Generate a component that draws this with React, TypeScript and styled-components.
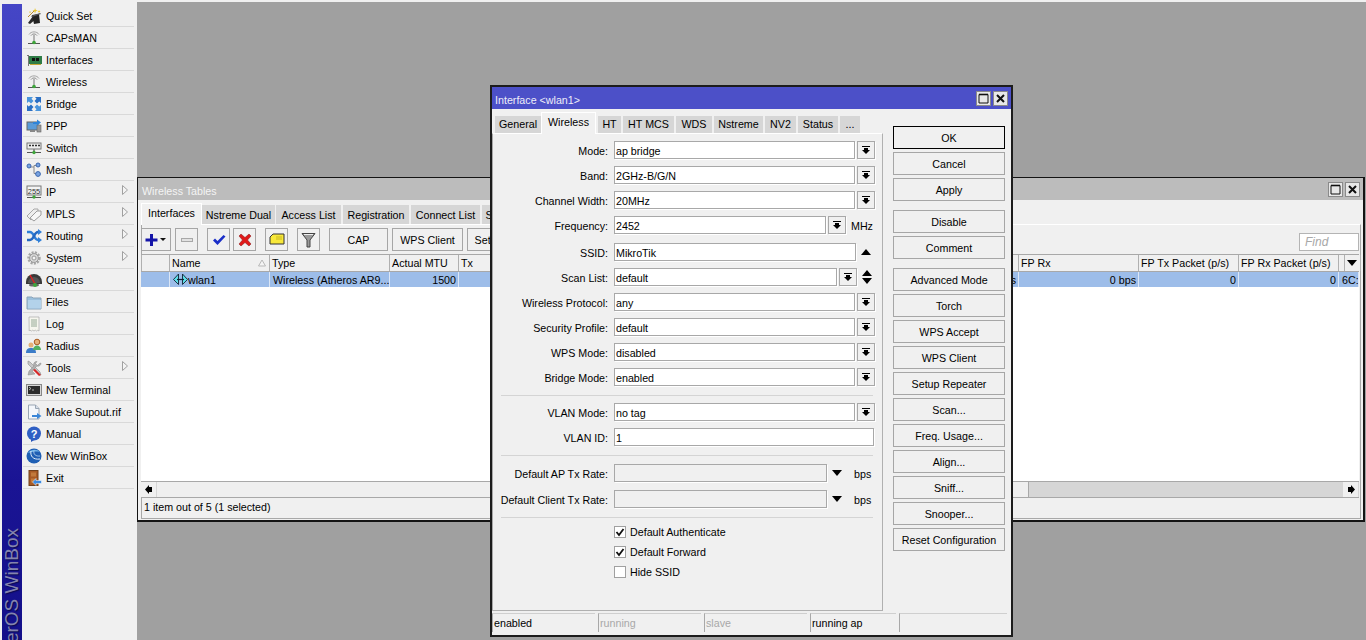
import React from "react";
import styled, { createGlobalStyle } from "styled-components";

const Global = createGlobalStyle`
  html, body { margin: 0; padding: 0; background: #f0f0f0; overflow: hidden; }
  * { box-sizing: border-box; }
  body { font: 10.7px "Liberation Sans", Arial, sans-serif; color: #000; }
`;

const Page = styled.div`
  display: flex;
  width: 1366px;
  height: 640px;
  overflow: hidden;
  background: #f0f0f0;
`;
const Sidebar = styled.aside`
  width: 137px;
  height: 640px;
  padding-left: 2px;
  display: flex;
  background: #f0f0f0;
  flex: none;
`;
const BrandStrip = styled.div`
  width: 20px;
  height: 636px;
  margin-top: 4px;
  background: linear-gradient(180deg, #4546c6 0%, #3232b0 40%, #1a1494 75%, #14108a 100%);
  display: flex;
  flex-direction: column;
  justify-content: flex-end;
  align-items: center;
  overflow: hidden;
`;
const BrandText = styled.div`
  writing-mode: vertical-rl;
  transform: rotate(180deg);
  white-space: nowrap;
  font-size: 19px;
  line-height: 20px;
  color: #8484ae;
  text-shadow: -1px 1px 1px #0b0b50;
  margin-bottom: -43px;
  flex: none;
`;
const Menu = styled.nav`
  width: 113px;
  padding: 5px 0 0 1px;
`;
const MenuRow = styled.div`
  height: 22px;
  display: flex;
  align-items: center;
  position: relative;
  border-bottom: 1px solid #d9d9d9;
  padding-left: 3px;
  gap: 4px;
  width: 111px;
`;
const MenuGlyph = styled.svg`
  width: 16px;
  height: 16px;
  flex: none;
`;
const MenuLabel = styled.span`
  white-space: nowrap;
  flex: 1;
`;
const SubArrow = styled.svg`
  width: 6px;
  height: 10px;
  margin: 0 6px 3px 0;
  flex: none;
`;
const Desktop = styled.main`
  flex: 1;
  position: relative;
  margin-top: 2px;
  background: #a0a0a0;
  overflow: hidden;
`;
const TablesWindow = styled.section`
  position: absolute;
  left: 0;
  top: 175px;
  width: 1228px;
  height: 345px;
  background: #f0f0f0;
  border: 1px solid #141414;
  border-width: 1px 2px 2px 1px;
  display: flex;
  flex-direction: column;
`;
const DialogWindow = styled.section`
  position: absolute;
  left: 353px;
  top: 83px;
  width: 523px;
  height: 552px;
  background: #f0f0f0;
  border: 2px solid #1c1c1c;
  display: flex;
  flex-direction: column;
`;
const TitleBar = styled.header<{ $active?: boolean }>`
  height: 22px;
  flex: none;
  display: flex;
  align-items: center;
  padding: 0 3px 0 ${(p) => (p.$active ? 3 : 4)}px;
  background: ${(p) => (p.$active ? "#4c50c8" : "#bcbcbc")};
  color: ${(p) => (p.$active ? "#ececf8" : "#f4f4f4")};
`;
const TitleText = styled.span`
  flex: 1;
  white-space: nowrap;
  padding-top: 4px;
`;
const WinButton = styled.button`
  width: 15px;
  height: 15px;
  margin-left: 2px;
  padding: 0;
  display: flex;
  align-items: center;
  justify-content: center;
  background: #e8e8e8;
  border: 1px solid #8a8a8a;
`;
const TabStrip = styled.div<{ $pad: number; $h: number }>`
  display: flex;
  align-items: flex-end;
  height: ${(p) => p.$h}px;
  padding-left: ${(p) => p.$pad}px;
  flex: none;
  position: relative;
`;
const Tab = styled.div<{ $w: number; $active?: boolean; $gap?: number; $tall?: boolean }>`
  width: ${(p) => p.$w}px;
  height: ${(p) => (p.$active ? 22 : p.$tall ? 19 : 17)}px;
  margin-right: ${(p) => p.$gap ?? 2}px;
  flex: none;
  display: flex;
  align-items: center;
  justify-content: center;
  white-space: nowrap;
  overflow: hidden;
  padding-bottom: ${(p) => (p.$tall ? 0 : 2)}px;
  background: ${(p) => (p.$active ? "#f0f0f0" : "#d6d6d6")};
  ${(p) => (p.$active ? "border: 1px solid #ffffff; border-bottom: 0; padding-bottom: 3px; margin-bottom: -1px; z-index: 1;" : "")}
`;
const TablesPanel = styled.div`
  height: 295px;
  margin: 0 2px 0 3px;
  border: 1px solid #a8a8a8;
  border-top-color: #ffffff;
  border-left-color: #a8a8a8;
  display: flex;
  flex-direction: column;
`;
const Toolbar = styled.div`
  display: flex;
  align-items: flex-start;
  height: 26px;
  padding-top: 3px;
  margin-left: -1px;
  flex: none;
`;
const ToolButton = styled.button<{ $w: number; $gap?: number }>`
  width: ${(p) => p.$w}px;
  height: 23px;
  margin-right: ${(p) => p.$gap ?? 4}px;
  flex: none;
  padding: 0;
  display: flex;
  align-items: center;
  justify-content: center;
  font: inherit;
  color: #000;
  white-space: nowrap;
  overflow: hidden;
  background: #f0f0f0;
  border: 1px solid #a6a6a6;
`;
const FindBox = styled.div`
  position: absolute;
  right: 1px;
  top: 8px;
  width: 60px;
  height: 18px;
  background: #fff;
  border: 1px solid #b4b4b4;
  padding: 2px 5px;
  color: #a8a8a8;
  font-style: italic;
  font-size: 12px;
  line-height: 13px;
`;
const ToolbarWrap = styled.div`
  position: relative;
  flex: none;
`;
const Table = styled.div`
  width: 1218px;
  height: 228px;
  margin-top: 3px;
  margin-left: -1px;
  background: #fff;
  display: flex;
  flex-direction: column;
  border-bottom: 1px solid #a8a8a8;
  flex: none;
`;
const HeadRow = styled.div`
  display: flex;
  height: 18px;
  flex: none;
  background: #f0f0f0;
  border-top: 1px solid #a8a8a8;
  border-bottom: 1px solid #a8a8a8;
`;
const HeadCell = styled.div<{ $w: number }>`
  width: ${(p) => p.$w}px;
  flex: none;
  padding: 0 3px 0 2px;
  white-space: nowrap;
  overflow: hidden;
  border-right: 1px solid #b0b0b0;
  border-left: 0;
  display: flex;
  align-items: center;
  justify-content: space-between;
  &:first-child { border-left: 1px solid #b0b0b0; }
`;
const DataRow = styled.div`
  display: flex;
  height: 15px;
  flex: none;
  background: #9dbde9;
`;
const DataCell = styled.div<{ $w: number; $right?: boolean }>`
  width: ${(p) => p.$w}px;
  flex: none;
  padding: 0 2px 0 3px;
  white-space: nowrap;
  overflow: hidden;
  border-right: 1px solid #dbe6f5;
  display: flex;
  align-items: center;
  justify-content: ${(p) => (p.$right ? "flex-end" : "flex-start")};
`;
const TableFill = styled.div`
  flex: 1;
`;
const HScroll = styled.div`
  width: 1218px;
  height: 16px;
  margin-left: -1px;
  display: flex;
  flex: none;
  background: #d6d6d6;
  border-bottom: 1px solid #a8a8a8;
`;
const ScrollBtn = styled.div`
  width: 16px;
  flex: none;
  background: #f0f0f0;
  border-right: 1px solid #d6d6d6;
  display: flex;
  align-items: center;
  justify-content: center;
`;
const ScrollThumb = styled.div`
  width: 872px;
  flex: none;
  background: #efefef;
  border-right: 1px solid #a8a8a8;
`;
const ScrollTrack = styled.div`
  flex: 1;
`;
const CountBar = styled.div`
  padding: 3px 2px 0;
  white-space: nowrap;
`;
const DialogBody = styled.div`
  display: flex;
  height: 504px;
  padding-left: 0;
  flex: none;
`;
const TabColumn = styled.div`
  width: 391px;
  flex: none;
  display: flex;
  flex-direction: column;
`;
const FormPanel = styled.div`
  height: 478px;
  border: 1px solid #b0b0b0;
  border-top-color: #ffffff;
  border-left: 1px solid #a8a8a8;
  padding-top: 7px;
  display: flex;
  flex-direction: column;
`;
const FormRow = styled.div<{ $top?: number }>`
  display: flex;
  align-items: center;
  height: 18px;
  margin-bottom: ${(p) => p.$top ?? 7}px;
  flex: none;
`;
const FieldLabel = styled.label`
  width: 115px;
  margin-right: 6px;
  padding-top: 2px;
  text-align: right;
  white-space: nowrap;
  flex: none;
`;
const TextField = styled.div<{ $w: number; $off?: boolean }>`
  width: ${(p) => p.$w}px;
  height: 18px;
  flex: none;
  padding: 3px 0 0 1px;
  line-height: 13px;
  white-space: nowrap;
  background: ${(p) => (p.$off ? "#f0f0f0" : "#fff")};
  border: 1px solid #a8a8a8;
  box-shadow: 1px 1px 0 #ffffff;
`;
const DropBtn = styled.div`
  width: 18px;
  height: 18px;
  flex: none;
  margin-left: 2px;
  display: flex;
  align-items: center;
  justify-content: center;
  background: #f0f0f0;
  border: 1px solid #a8a8a8;
  box-shadow: 1px 1px 0 #ffffff;
`;
const SideGlyph = styled.svg<{ $ml: number }>`
  margin-left: ${(p) => p.$ml}px;
  flex: none;
`;
const Unit = styled.span<{ $ml: number }>`
  margin-left: ${(p) => p.$ml}px;
  padding-top: 2px;
  white-space: nowrap;
`;
const Divider = styled.hr<{ $after: number }>`
  height: 1px;
  width: 372px;
  margin: 0 0 ${(p) => p.$after}px 8px;
  border: 0;
  background: #d4d4d4;
  flex: none;
`;
const CheckRow = styled.div`
  display: flex;
  align-items: center;
  height: 13px;
  margin: 0 0 7px 121px;
  gap: 4px;
  white-space: nowrap;
  flex: none;
`;
const CheckBox = styled.span`
  width: 12px;
  height: 12px;
  flex: none;
  background: #fff;
  border: 1px solid #a0a0a0;
  display: flex;
  align-items: center;
  justify-content: center;
`;
const ActionColumn = styled.div`
  width: 112px;
  margin-left: 10px;
  padding-top: 17px;
  flex: none;
  display: flex;
  flex-direction: column;
`;
const ActionButton = styled.button<{ $primary?: boolean; $after?: number }>`
  height: 23px;
  width: 112px;
  flex: none;
  margin-bottom: ${(p) => p.$after ?? 3}px;
  padding: 0;
  font: inherit;
  color: #000;
  background: #f0f0f0;
  border: 1px solid ${(p) => (p.$primary ? "#000" : "#a6a6a6")};
`;
const StatusBar = styled.footer`
  display: flex;
  height: 19px;
  padding-left: 0;
  gap: 3px;
  flex: none;
`;
const StatusCell = styled.div<{ $w: number; $off?: boolean }>`
  width: ${(p) => p.$w}px;
  flex: none;
  border-left: 1px solid #a8a8a8;
  border-top: 1px solid #cfcfcf;
  padding: 3px 0 0 1px;
  line-height: 13px;
  white-space: nowrap;
  color: ${(p) => (p.$off ? "#a8a8a8" : "#000")};
`;

const Antenna = () => (
  <>
    <path d="M3 4.5C5 1 11 1 13 4.5" fill="none" stroke="#a4a4a4" strokeWidth="1" />
    <path d="M5 5.5C6.5 3.5 9.5 3.5 11 5.5" fill="none" stroke="#888" strokeWidth="1" />
    <rect x="7.5" y="5" width="1" height="7" fill="#777" />
    <rect x="2" y="13" width="12" height="1" fill="#555" />
    <circle cx="8" cy="12.5" r="1.8" fill="#3da63a" />
  </>
);
const icons: Record<string, React.ReactNode> = {
  quick: (
    <>
      <path d="M2 15L7 8l3 3-6 5z" fill="#2a2a2a" />
      <path d="M6 7l7-1 1 9-6 1z" fill="#222" />
      <path d="M5 8l9-3 1 1-9 3z" fill="#555" />
      <path d="M2 9L9 2" stroke="#b88a2c" strokeWidth="1" />
      <path d="M9 0l.8 2 2 .5-2 .8L9 5.5 8.3 3.3 6.5 2.5l2-.5zM13 2l.5 1 1 .5-1 .4-.5 1-.4-1-1-.4 1-.5zM4 3l.4.8.8.3-.8.3-.4.8-.3-.8-.8-.3.8-.3z" fill="#e8c52e" />
    </>
  ),
  ant: <Antenna />,
  nic: (
    <>
      <path d="M1 3h2v11H2V4H1z" fill="#777" />
      <rect x="3" y="4" width="13" height="8" fill="#2f7c46" />
      <rect x="6" y="6" width="3" height="3" fill="#111" />
      <rect x="10" y="6" width="3" height="3" fill="#111" />
      <rect x="4" y="12" width="11" height="1" fill="#c8a83a" />
    </>
  ),
  bridge: (
    <>
      <path d="M1 1h6L5.5 2.8 7.5 5 5 7.5 2.8 5.5 1 7z" fill="#4a95dc" />
      <path d="M15 1H9l1.5 1.8L8.5 5 11 7.5l2.2-2L15 7z" fill="#2a6fc4" />
      <path d="M1 15h6l-1.5-1.8L7.5 11 5 8.5l-2.2 2L1 9z" fill="#2a6fc4" />
      <path d="M15 15H9l1.5-1.8L8.5 11 11 8.5l2.2 2L15 9z" fill="#4a95dc" />
    </>
  ),
  ppp: (
    <>
      <rect x="1" y="4" width="11" height="8" fill="#5a9bd8" stroke="#666" />
      <rect x="4" y="12" width="5" height="2" fill="#888" />
      <rect x="11" y="7" width="4" height="7" fill="#999" stroke="#666" strokeWidth=".6" />
      <path d="M7 4h4V1.5L15 4.5 11 7.5V6H7z" fill="#2f84d8" />
    </>
  ),
  sw: (
    <>
      <rect x="1" y="3" width="14" height="6" fill="#efefef" stroke="#777" />
      <path d="M3 5.5h2M6 5.5h2M9 5.5h2M12 5.5h2" stroke="#333" strokeWidth="1.4" />
      <rect x="1" y="12" width="14" height="1" fill="#555" />
      <rect x="7" y="9" width="2" height="3" fill="#888" />
      <circle cx="8" cy="12.5" r="1.7" fill="#3da63a" />
    </>
  ),
  mesh: (
    <>
      <path d="M3.5 5H8V3.5h4M8 5v6.5h3" fill="none" stroke="#8a8a8a" />
      <circle cx="3" cy="4" r="2" fill="#7aa4e0" stroke="#3a66b0" />
      <circle cx="12" cy="3" r="2" fill="#7aa4e0" stroke="#3a66b0" />
      <circle cx="12" cy="12" r="2.4" fill="#7aa4e0" stroke="#3a66b0" />
    </>
  ),
  ip: (
    <>
      <rect x="1" y="2" width="14" height="9" fill="#f4f4f4" stroke="#777" />
      <text x="8" y="9.6" fontSize="7.5" textAnchor="middle" fill="#333" fontFamily="Liberation Sans">255</text>
      <rect x="1" y="13" width="14" height="1" fill="#555" />
      <circle cx="8" cy="13" r="1.7" fill="#3da63a" />
    </>
  ),
  tag: (
    <>
      <path d="M1 10l7-7h4v4l-7 7z" fill="#eee" stroke="#a8a8a8" />
      <path d="M4 12l7-7h4v4l-7 6z" fill="#f7f7f7" stroke="#9c9c9c" />
    </>
  ),
  routing: (
    <>
      <path d="M1 4h3c4 0 4 8 8 8h1" fill="none" stroke="#2f7fd8" strokeWidth="2.4" />
      <path d="M1 12h3c4 0 4-8 8-8h1" fill="none" stroke="#2468c0" strokeWidth="2.4" />
      <path d="M12 1l4 3-4 3zM12 9l4 3-4 3z" fill="#2f7fd8" />
    </>
  ),
  gear: (
    <>
      <circle cx="8" cy="8" r="5.4" fill="none" stroke="#a6a6a6" strokeWidth="2.6" strokeDasharray="2 1.2" />
      <circle cx="8" cy="8" r="4.4" fill="#d8d8d8" stroke="#999" />
      <circle cx="8" cy="8" r="2" fill="#f4f4f4" stroke="#999" />
    </>
  ),
  gauge: (
    <>
      <path d="M0 10a8 8 0 0 1 16 0v2H0z" fill="#3a3a3a" />
      <path d="M2 11a6 6 0 0 1 12 0z" fill="#555" />
      <path d="M4 3l5 9" stroke="#e02020" strokeWidth="1.4" />
      <ellipse cx="8" cy="13" rx="5" ry="1.5" fill="#666" />
      <circle cx="9" cy="13" r="2" fill="#3da63a" />
    </>
  ),
  folder: (
    <>
      <path d="M1 3h5l1 1h8v11H1z" fill="#9cc0dd" stroke="#8aa3b8" />
      <rect x="2" y="6" width="13" height="8.5" fill="#b3d2ea" />
    </>
  ),
  log: (
    <>
      <path d="M3 1h10v14l-1.2-.8-1.2.8-1.3-.8-1.3.8-1.3-.8-1.3.8-1.4-.8-.8.8z" fill="#f6f6ee" stroke="#aaa" strokeWidth=".7" />
      <path d="M5 4h6M5 6h6M5 8h6M5 10h6" stroke="#8aa08a" strokeWidth=".9" />
    </>
  ),
  radius: (
    <>
      <circle cx="5" cy="7" r="2.5" fill="#e4b078" />
      <path d="M0 15c0-4 2-5 5-5s5 1 5 5z" fill="#3c7cc8" />
      <circle cx="11" cy="4" r="2.8" fill="#e4b078" stroke="#a85a20" />
      <path d="M7 12c0-3 2-4.5 4-4.5s4 1.5 4 4.5z" fill="#52b060" />
    </>
  ),
  tools: (
    <>
      <path d="M2 1l2 1 10 10 1 3-3-1L2 4z" fill="#c8c8c8" stroke="#8a8a8a" strokeWidth=".6" />
      <path d="M15 3a3 3 0 0 1-4 3L6 11 9 14 2 15l1-4 5-5a3 3 0 0 1 3-4.5L9.5 3.5 11.5 5.5 13.5 3.5z" fill="#b0b0b0" stroke="#888" strokeWidth=".5" />
      <path d="M9 9l6 6-2 1-6-6z" fill="#d82828" />
    </>
  ),
  term: (
    <>
      <rect x="0.5" y="2.5" width="15" height="11" fill="#d8d8d8" stroke="#888" />
      <rect x="2" y="4" width="12" height="8" fill="#2c2c2c" />
      <path d="M3 5l2 1.5-2 1.5M6 8h2" stroke="#ccc" strokeWidth=".8" fill="none" />
    </>
  ),
  supout: (
    <>
      <path d="M2.5 1h7L13 4.5V15H2.500z" fill="#f4f7fb" stroke="#9aa6b4" />
      <path d="M9.5 1v3.500H13" fill="#d5dde8" stroke="#9aa6b4" />
      <path d="M6 11h5V9l4.500 3-4.500 3v-2H6z" fill="#3a86d8" />
    </>
  ),
  help: (
    <>
      <path d="M5 13v3l4-2.500z" fill="#2a56b8" />
      <circle cx="8" cy="7.5" r="7" fill="#2f5fc4" />
      <text x="8" y="11.5" fontSize="11" fontWeight="bold" textAnchor="middle" fill="#fff" fontFamily="Liberation Sans">?</text>
    </>
  ),
  winbox: (
    <>
      <circle cx="8" cy="8" r="7.5" fill="#1f5fb4" />
      <path d="M2 5c3-4 9-4 12-1-4-1-8 0-12 1z" fill="#6fb2e8" />
      <path d="M5 3c-1 5 2 9 9 8" fill="none" stroke="#e4f0fa" strokeWidth="1" />
      <path d="M8 2.500c-1 4 2 6 6 5.500" fill="none" stroke="#bcd8f0" strokeWidth=".8" />
    </>
  ),
  exit: (
    <>
      <rect x="3" y="0.5" width="9" height="15" fill="#a85a24" stroke="#70401c" />
      <rect x="5" y="2.5" width="5" height="4" fill="#c27a3c" />
      <rect x="5" y="8.5" width="5" height="4" fill="#c27a3c" />
      <path d="M15.5 10.500H10V8.500L6.500 12 10 15.500v-2h5.500z" fill="#3c8ae0" stroke="#fff" strokeWidth=".5" />
    </>
  ),
};

const menu: [string, string, boolean?][] = [
  ["Quick Set", "quick"], ["CAPsMAN", "ant"], ["Interfaces", "nic"], ["Wireless", "ant"],
  ["Bridge", "bridge"], ["PPP", "ppp"], ["Switch", "sw"], ["Mesh", "mesh"],
  ["IP", "ip", true], ["MPLS", "tag", true], ["Routing", "routing", true], ["System", "gear", true],
  ["Queues", "gauge"], ["Files", "folder"], ["Log", "log"], ["Radius", "radius"],
  ["Tools", "tools", true], ["New Terminal", "term"], ["Make Supout.rif", "supout"],
  ["Manual", "help"], ["New WinBox", "winbox"], ["Exit", "exit"],
];

const DropGlyph = () => (
  <svg width="10" height="10" viewBox="0 0 10 10"><path d="M1 1h8v1H1zM3 3h4v2h2L5 9 1 5h2z" fill="#000" /></svg>
);
const MaxGlyph = () => (
  <svg width="11" height="11" viewBox="0 0 11 11"><path d="M1 1.5h9V10H1z" fill="none" stroke="#111" /><path d="M1 1.500h9" stroke="#111" strokeWidth="1.6" /></svg>
);
const CloseGlyph = () => (
  <svg width="9" height="9" viewBox="0 0 9 9"><path d="M1 1l7 7M8 1L1 8" stroke="#111" strokeWidth="2" /></svg>
);
const Tick = () => (
  <svg width="10" height="10" viewBox="0 0 10 10"><path d="M1.5 5L4 8l4.500-6" fill="none" stroke="#111" strokeWidth="1.8" /></svg>
);

const columns: [string, number][] = [
  ["", 29], ["Name", 100], ["Type", 120], ["Actual MTU", 69], ["Tx", 80], ["Rx", 80],
  ["Tx Packet (p/s)", 100], ["Rx Packet (p/s)", 100], ["FP Tx", 200],
  ["FP Rx", 120], ["FP Tx Packet (p/s)", 100], ["FP Rx Packet (p/s)", 100], ["", 4],
];
const rowCells: [string, number, boolean?][] = [
  ["", 29], ["wlan1", 100], ["Wireless (Atheros AR9...", 120], ["1500", 69, true], ["", 80], ["", 80],
  ["", 100], ["", 100], ["0 bps", 200, true], ["0 bps", 120, true], ["0", 100, true], ["0", 100, true], ["6C:", 20],
];

type F = { label: string; value: string };
const topFields: F[] = [
  { label: "Mode:", value: "ap bridge" },
  { label: "Band:", value: "2GHz-B/G/N" },
  { label: "Channel Width:", value: "20MHz" },
];
const midFields: F[] = [
  { label: "Wireless Protocol:", value: "any" },
  { label: "Security Profile:", value: "default" },
  { label: "WPS Mode:", value: "disabled" },
  { label: "Bridge Mode:", value: "enabled" },
];
const actions: [string, boolean?, number?][] = [
  ["OK", true], ["Cancel"], ["Apply", false, 9], ["Disable"], ["Comment", false, 9],
  ["Advanced Mode"], ["Torch"], ["WPS Accept"], ["WPS Client"], ["Setup Repeater"], ["Scan..."],
  ["Freq. Usage..."], ["Align..."], ["Sniff..."], ["Snooper..."], ["Reset Configuration"],
];

export default function App() {
  return (
    <Page>
      <Global />
      <Sidebar>
        <BrandStrip>
          <BrandText>RouterOS WinBox</BrandText>
        </BrandStrip>
        <Menu>
          {menu.map(([label, icon, sub]) => (
            <MenuRow key={label}>
              <MenuGlyph viewBox="0 0 16 16">{icons[icon]}</MenuGlyph>
              <MenuLabel>{label}</MenuLabel>
              {sub && (
                <SubArrow viewBox="0 0 6 10"><path d="M.5.5l5 4.500-5 4.500z" fill="#f4f4f4" stroke="#a0a0a0" /></SubArrow>
              )}
            </MenuRow>
          ))}
        </Menu>
      </Sidebar>
      <Desktop>
        <TablesWindow>
          <TitleBar>
            <TitleText>Wireless Tables</TitleText>
            <WinButton><MaxGlyph /></WinButton>
            <WinButton><CloseGlyph /></WinButton>
          </TitleBar>
          <TabStrip $pad={3} $h={24}>
            <Tab $w={61} $active $gap={0}>Interfaces</Tab>
            <Tab $w={73} $gap={1} $tall>Nstreme Dual</Tab>
            <Tab $w={65} $gap={2} $tall>Access List</Tab>
            <Tab $w={66} $gap={2} $tall>Registration</Tab>
            <Tab $w={69} $gap={2} $tall>Connect List</Tab>
            <Tab $w={84} $tall>Security Profiles</Tab>
          </TabStrip>
          <TablesPanel>
            <ToolbarWrap>
              <Toolbar>
                <ToolButton $w={30}>
                  <svg width="24" height="16" viewBox="0 0 24 16">
                    <path d="M6 2h3v4.500h4.500v3H9V14H6V9.500H1.500v-3H6z" fill="#1414a8" />
                    <path d="M16 6h6l-3 3z" fill="#111" />
                  </svg>
                </ToolButton>
                <ToolButton $w={23} $gap={9}>
                  <svg width="12" height="6" viewBox="0 0 12 6"><rect x=".5" y="1.5" width="11" height="3" fill="#e2e2e2" stroke="#a8a8a8" /></svg>
                </ToolButton>
                <ToolButton $w={23} $gap={3}>
                  <svg width="14" height="14" viewBox="0 0 14 14"><path d="M1 7.500l2-2 2.500 2.500L11.500 2l2 1.500L5.500 12z" fill="#1a2ec8" /></svg>
                </ToolButton>
                <ToolButton $w={23} $gap={9}>
                  <svg width="14" height="14" viewBox="0 0 14 14"><path d="M3 1l4 3.500L11 1l2 2-3.500 4L13 11l-2 2-4-3.500L3 13l-2-2 3.500-4L1 3z" fill="#e01818" stroke="#801010" strokeWidth=".5" /></svg>
                </ToolButton>
                <ToolButton $w={23} $gap={9}>
                  <svg width="16" height="14" viewBox="0 0 16 14"><path d="M1 4l3-3h11v10H1z" fill="#f8e83a" stroke="#333" /><path d="M7 4h6M7 6h6" stroke="#c8b820" /></svg>
                </ToolButton>
                <ToolButton $w={23} $gap={9}>
                  <svg width="15" height="16" viewBox="0 0 15 16"><path d="M1 1.500h13L9 8v7H6V8z" fill="#9a9a9a" stroke="#444" /><path d="M3 2.500h9" stroke="#eee" /></svg>
                </ToolButton>
                <ToolButton $w={59}>CAP</ToolButton>
                <ToolButton $w={71}>WPS Client</ToolButton>
                <ToolButton $w={90}>Setup Repeater</ToolButton>
              </Toolbar>
              <FindBox>Find</FindBox>
            </ToolbarWrap>
            <Table>
              <HeadRow>
                {columns.map(([label, w], i) => (
                  <HeadCell $w={w} key={i}>
                    {label}
                    {label === "Name" && (
                      <svg width="8" height="8" viewBox="0 0 8 8"><path d="M4 1l3.500 6H.5z" fill="#f4f4f4" stroke="#b8b8b8" /></svg>
                    )}
                  </HeadCell>
                ))}
                <HeadCell $w={16}>
                  <svg width="10" height="6" viewBox="0 0 10 6"><path d="M0 0h10L5 6z" fill="#000" /></svg>
                </HeadCell>
              </HeadRow>
              <DataRow>
                {rowCells.map(([value, w, right], i) => (
                  <DataCell $w={w} $right={right} key={i}>
                    {value === "wlan1" && (
                      <svg width="15" height="13" viewBox="0 0 15 13">
                        <path d="M5.500 1L.5 6.500l5 5zM9.500 1l5 5.500-5 5z" fill="#5ee0e8" stroke="#123" strokeWidth=".9" />
                        <path d="M4 6.500h7" stroke="#123" strokeWidth="1.2" />
                      </svg>
                    )}
                    {value}
                  </DataCell>
                ))}
              </DataRow>
              <TableFill />
            </Table>
            <HScroll>
              <ScrollBtn>
                <svg width="8" height="9" viewBox="0 0 8 9"><path d="M0 4.500L4 0v2h3v5H4v2z" fill="#000" /></svg>
              </ScrollBtn>
              <ScrollThumb />
              <ScrollTrack />
              <ScrollBtn>
                <svg width="8" height="9" viewBox="0 0 8 9"><path d="M8 4.500L4 0v2H1v5h3v2z" fill="#000" /></svg>
              </ScrollBtn>
            </HScroll>
            <CountBar>1 item out of 5 (1 selected)</CountBar>
          </TablesPanel>
        </TablesWindow>

        <DialogWindow>
          <TitleBar $active>
            <TitleText>Interface &lt;wlan1&gt;</TitleText>
            <WinButton><MaxGlyph /></WinButton>
            <WinButton><CloseGlyph /></WinButton>
          </TitleBar>
          <DialogBody>
            <TabColumn>
              <TabStrip $pad={3} $h={24}>
                <Tab $w={46} $gap={0}>General</Tab>
                <Tab $w={55} $active>Wireless</Tab>
                <Tab $w={23}>HT</Tab>
                <Tab $w={51}>HT MCS</Tab>
                <Tab $w={36}>WDS</Tab>
                <Tab $w={49}>Nstreme</Tab>
                <Tab $w={31}>NV2</Tab>
                <Tab $w={40}>Status</Tab>
                <Tab $w={20}>...</Tab>
              </TabStrip>
              <FormPanel>
                {topFields.map((f) => (
                  <FormRow key={f.label}>
                    <FieldLabel>{f.label}</FieldLabel>
                    <TextField $w={241}>{f.value}</TextField>
                    <DropBtn><DropGlyph /></DropBtn>
                  </FormRow>
                ))}
                <FormRow $top={9}>
                  <FieldLabel>Frequency:</FieldLabel>
                  <TextField $w={212}>2452</TextField>
                  <DropBtn><DropGlyph /></DropBtn>
                  <Unit $ml={5}>MHz</Unit>
                </FormRow>
                <FormRow>
                  <FieldLabel>SSID:</FieldLabel>
                  <TextField $w={242}>MikroTik</TextField>
                  <SideGlyph $ml={5} width="10" height="6" viewBox="0 0 10 6"><path d="M5 0l5 6H0z" fill="#000" /></SideGlyph>
                </FormRow>
                <FormRow>
                  <FieldLabel>Scan List:</FieldLabel>
                  <TextField $w={223}>default</TextField>
                  <DropBtn><DropGlyph /></DropBtn>
                  <SideGlyph $ml={5} width="10" height="14" viewBox="0 0 10 14"><path d="M5 0l5 6H0zM0 8h10l-5 6z" fill="#000" /></SideGlyph>
                </FormRow>
                {midFields.map((f, i) => (
                  <FormRow key={f.label} $top={i === 3 ? 9 : 7}>
                    <FieldLabel>{f.label}</FieldLabel>
                    <TextField $w={241}>{f.value}</TextField>
                    <DropBtn><DropGlyph /></DropBtn>
                  </FormRow>
                ))}
                <Divider $after={7} />
                <FormRow>
                  <FieldLabel>VLAN Mode:</FieldLabel>
                  <TextField $w={241}>no tag</TextField>
                  <DropBtn><DropGlyph /></DropBtn>
                </FormRow>
                <FormRow $top={9}>
                  <FieldLabel>VLAN ID:</FieldLabel>
                  <TextField $w={260}>1</TextField>
                </FormRow>
                <Divider $after={8} />
                <FormRow $top={8}>
                  <FieldLabel>Default AP Tx Rate:</FieldLabel>
                  <TextField $w={213} $off />
                  <SideGlyph $ml={5} width="10" height="6" viewBox="0 0 10 6"><path d="M0 0h10L5 6z" fill="#000" /></SideGlyph>
                  <Unit $ml={12}>bps</Unit>
                </FormRow>
                <FormRow $top={9}>
                  <FieldLabel>Default Client Tx Rate:</FieldLabel>
                  <TextField $w={213} $off />
                  <SideGlyph $ml={5} width="10" height="6" viewBox="0 0 10 6"><path d="M0 0h10L5 6z" fill="#000" /></SideGlyph>
                  <Unit $ml={12}>bps</Unit>
                </FormRow>
                <Divider $after={7} />
                <CheckRow><CheckBox><Tick /></CheckBox>Default Authenticate</CheckRow>
                <CheckRow><CheckBox><Tick /></CheckBox>Default Forward</CheckRow>
                <CheckRow><CheckBox />Hide SSID</CheckRow>
              </FormPanel>
            </TabColumn>
            <ActionColumn>
              {actions.map(([label, primary, after]) => (
                <ActionButton key={label} $primary={!!primary} $after={after}>{label}</ActionButton>
              ))}
            </ActionColumn>
          </DialogBody>
          <StatusBar>
            <StatusCell $w={103}>enabled</StatusCell>
            <StatusCell $w={103} $off>running</StatusCell>
            <StatusCell $w={103} $off>slave</StatusCell>
            <StatusCell $w={86}>running ap</StatusCell>
            <StatusCell $w={108} />
          </StatusBar>
        </DialogWindow>
      </Desktop>
    </Page>
  );
}
